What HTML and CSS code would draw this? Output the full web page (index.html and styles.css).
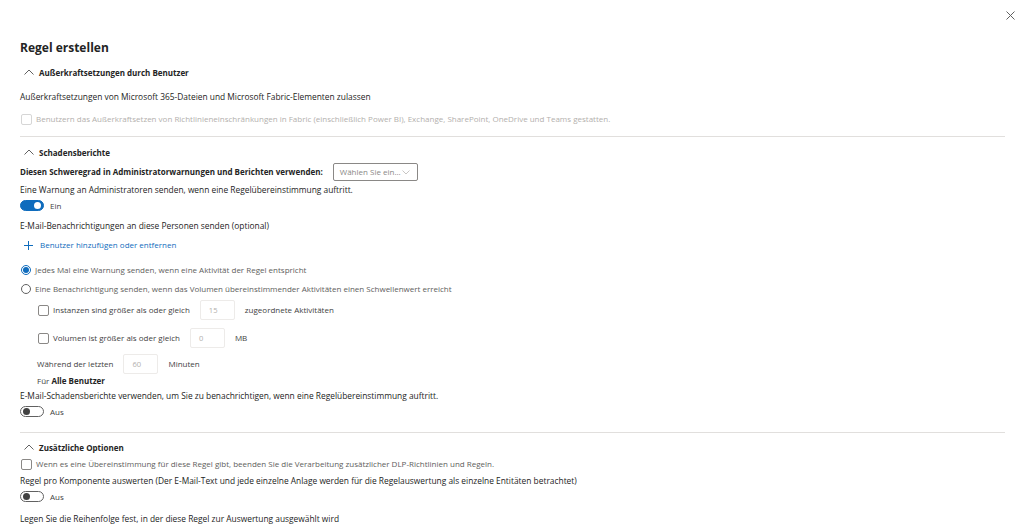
FILE: index.html
```html
<!DOCTYPE html>
<html lang="de">
<head>
  <meta charset="utf-8">
  <title>Regel erstellen</title>
  <link rel="stylesheet" href="styles.css">
</head>
<body>
  <button class="close" aria-label="Schließen">
    <svg width="9" height="9" viewBox="0 0 9 9"><path d="M0.5 0.5L8.5 8.5M8.5 0.5L0.5 8.5" stroke="#616161" stroke-width="1"/></svg>
  </button>

  <div class="panel">
    <h1 class="title">Regel erstellen</h1>

    <!-- Außerkraftsetzungen -->
    <div class="sec-head m9">
      <svg class="chev" width="10" height="6" viewBox="0 0 10 6"><path d="M0.5 5.5L5 1L9.5 5.5" fill="none" stroke="#616161" stroke-width="1"/></svg>
      <span>Außerkraftsetzungen durch Benutzer</span>
    </div>
    <div class="row m13">Außerkraftsetzungen von Microsoft 365-Dateien und Microsoft Fabric-Elementen zulassen</div>
    <label class="row check disabled m10"><span class="box"></span>Benutzern das Außerkraftsetzen von Richtlinieneinschränkungen in Fabric (einschließlich Power BI), Exchange, SharePoint, OneDrive und Teams gestatten.</label>
    <hr class="divider d1">

    <!-- Schadensberichte -->
    <div class="sec-head m9">
      <svg class="chev" width="10" height="6" viewBox="0 0 10 6"><path d="M0.5 5.5L5 1L9.5 5.5" fill="none" stroke="#616161" stroke-width="1"/></svg>
      <span>Schadensberichte</span>
    </div>
    <div class="row tall m5">
      <strong class="bold-label">Diesen Schweregrad in Administratorwarnungen und Berichten verwenden:</strong>
      <div class="select">
        <span>Wählen Sie ein...</span>
        <svg width="8" height="5" viewBox="0 0 8 5"><path d="M0.5 0.5L4 4L7.5 0.5" fill="none" stroke="#c8c6c4" stroke-width="1"/></svg>
      </div>
    </div>
    <div class="row m3">Eine Warnung an Administratoren senden, wenn eine Regelübereinstimmung auftritt.</div>
    <div class="row toggle-row m4"><span class="toggle on"><i></i></span><span class="toggle-label">Ein</span></div>
    <div class="row m9">E-Mail-Benachrichtigungen an diese Personen senden (optional)</div>
    <div class="row link m7">
      <svg width="9" height="9" viewBox="0 0 9 9"><path d="M4.5 0V9M0 4.5H9" stroke="#0f6cbd" stroke-width="1"/></svg>
      <span>Benutzer hinzufügen oder entfernen</span>
    </div>
    <label class="row radio light m13"><span class="dot checked"></span>Jedes Mal eine Warnung senden, wenn eine Aktivität der Regel entspricht</label>
    <label class="row radio light m7"><span class="dot"></span>Eine Benachrichtigung senden, wenn das Volumen übereinstimmender Aktivitäten einen Schwellenwert erreicht</label>

    <div class="sub">
      <div class="row tall20 m5">
        <label class="check"><span class="box"></span>Instanzen sind größer als oder gleich</label>
        <span class="input">15</span>
        <span class="after">zugeordnete Aktivitäten</span>
      </div>
      <div class="row tall20 m8">
        <label class="check"><span class="box"></span>Volumen ist größer als oder gleich</label>
        <span class="input">0</span>
        <span class="after">MB</span>
      </div>
      <div class="row tall20 m6">
        <span>Während der letzten</span>
        <span class="input">60</span>
        <span class="after">Minuten</span>
      </div>
      <div class="row m1">Für&nbsp;<strong class="strong-dark">Alle Benutzer</strong></div>
    </div>

    <div class="row m3">E-Mail-Schadensberichte verwenden, um Sie zu benachrichtigen, wenn eine Regelübereinstimmung auftritt.</div>
    <div class="row toggle-row m4"><span class="toggle"><i></i></span><span class="toggle-label">Aus</span></div>
    <hr class="divider d2">

    <!-- Zusätzliche Optionen -->
    <div class="sec-head m8">
      <svg class="chev" width="10" height="6" viewBox="0 0 10 6"><path d="M0.5 5.5L5 1L9.5 5.5" fill="none" stroke="#616161" stroke-width="1"/></svg>
      <span>Zusätzliche Optionen</span>
    </div>
    <label class="row check light m5"><span class="box"></span>Wenn es eine Übereinstimmung für diese Regel gibt, beenden Sie die Verarbeitung zusätzlicher DLP-Richtlinien und Regeln.</label>
    <div class="row m5">Regel pro Komponente auswerten (Der E-Mail-Text und jede einzelne Anlage werden für die Regelauswertung als einzelne Entitäten betrachtet)</div>
    <div class="row toggle-row m4"><span class="toggle"><i></i></span><span class="toggle-label">Aus</span></div>
    <div class="row m11">Legen Sie die Reihenfolge fest, in der diese Regel zur Auswertung ausgewählt wird</div>
  </div>
</body>
</html>
```

FILE: styles.css
```css
* {
  margin: 0;
  padding: 0;
  box-sizing: border-box;
}

body {
  font-family: "Open Sans", "Noto Sans", sans-serif;
  font-size: 8.4px;
  color: #242424;
  background: #fff;
  height: 524px;
  overflow: hidden;
}

/* close button in the corner */
.close {
  position: absolute;
  top: 11px;
  right: 9px;
  border: none;
  background: none;
  width: 9px;
  height: 9px;
  display: flex;
}

.panel {
  padding: 39px 19px 0 20px;
}

.title {
  font-size: 12px;
  font-weight: 700;
  height: 18px;
  line-height: 18px;
}

.row {
  display: flex;
  align-items: center;
  height: 12px;
  line-height: 12px;
  white-space: nowrap;
}

.row.tall {
  height: 18px;
}

.row.tall20 {
  height: 20px;
}

.toggle-row {
  height: 11px;
}

.m1 { margin-top: 1px; }
.m3 { margin-top: 3px; }
.m4 { margin-top: 4px; }
.m5 { margin-top: 5px; }
.m6 { margin-top: 6px; }
.m7 { margin-top: 7px; }
.m8 { margin-top: 8px; }
.m9 { margin-top: 9px; }
.m10 { margin-top: 10px; }
.m11 { margin-top: 11px; }
.m13 { margin-top: 13px; }

.sec-head {
  display: flex;
  align-items: center;
  height: 12px;
  font-weight: 700;
  font-size: 8px;
  padding-left: 4px;
}

.chev {
  margin-right: 5px;
  margin-top: -1px;
}

strong {
  font-weight: 700;
}

.bold-label {
  font-size: 8px;
}

.strong-dark {
  color: #242424;
}

.divider {
  border: none;
  border-top: 1px solid #e1dfdd;
  height: 0;
}

.d1 { margin-top: 11px; }
.d2 { margin-top: 15px; }

/* dropdown */
.select {
  margin-left: 10px;
  width: 85px;
  height: 18px;
  border: 1px solid #8a8886;
  border-radius: 2px;
  display: flex;
  align-items: center;
  justify-content: space-between;
  padding: 0 7px 0 6px;
  color: #8a8886;
  font-size: 8px;
}

/* toggles */
.toggle {
  width: 24px;
  height: 11px;
  border-radius: 6px;
  border: 1px solid #616161;
  background: #fff;
  display: flex;
  align-items: center;
  padding: 0 2px;
}

.toggle i {
  width: 7px;
  height: 7px;
  border-radius: 50%;
  background: #424242;
}

.toggle.on {
  background: #0f6cbd;
  border-color: #0f6cbd;
  justify-content: flex-end;
}

.toggle.on i {
  background: #fff;
}

.toggle-label {
  margin-left: 6px;
  color: #424242;
  font-size: 8px;
}

/* link */
.link {
  color: #0f6cbd;
  padding-left: 4px;
  font-size: 8px;
}

.link svg {
  margin-right: 7px;
}

/* checkboxes and radios */
.check {
  display: flex;
  align-items: center;
}

.box {
  width: 11px;
  height: 11px;
  border: 1px solid #8a8886;
  border-radius: 2px;
  margin: 0 4px 0 1px;
  flex: none;
}

.disabled {
  color: #b3b0ad;
  font-size: 8px;
}

.disabled .box {
  border-color: #d6d6d6;
}

.light {
  color: #605e5c;
  font-size: 8px;
}

.radio {
  display: flex;
  align-items: center;
}

.dot {
  width: 10px;
  height: 10px;
  border: 1px solid #616161;
  border-radius: 50%;
  margin: 0 4px 0 1px;
  display: flex;
  align-items: center;
  justify-content: center;
}

.dot.checked {
  border-color: #0f6cbd;
}

.dot.checked::after {
  content: "";
  width: 6px;
  height: 6px;
  border-radius: 50%;
  background: #0f6cbd;
}

/* threshold block */
.sub {
  padding-left: 17px;
  color: #424242;
  font-size: 8px;
}

.sub .box {
  margin-left: 1px;
}

.input {
  width: 35px;
  height: 20px;
  margin-left: 10px;
  border: 1px solid #edebe9;
  border-radius: 2px;
  color: #b3b0ad;
  display: flex;
  align-items: center;
  padding-left: 8px;
  font-size: 7.6px;
}

.after {
  margin-left: 10px;
}
```
